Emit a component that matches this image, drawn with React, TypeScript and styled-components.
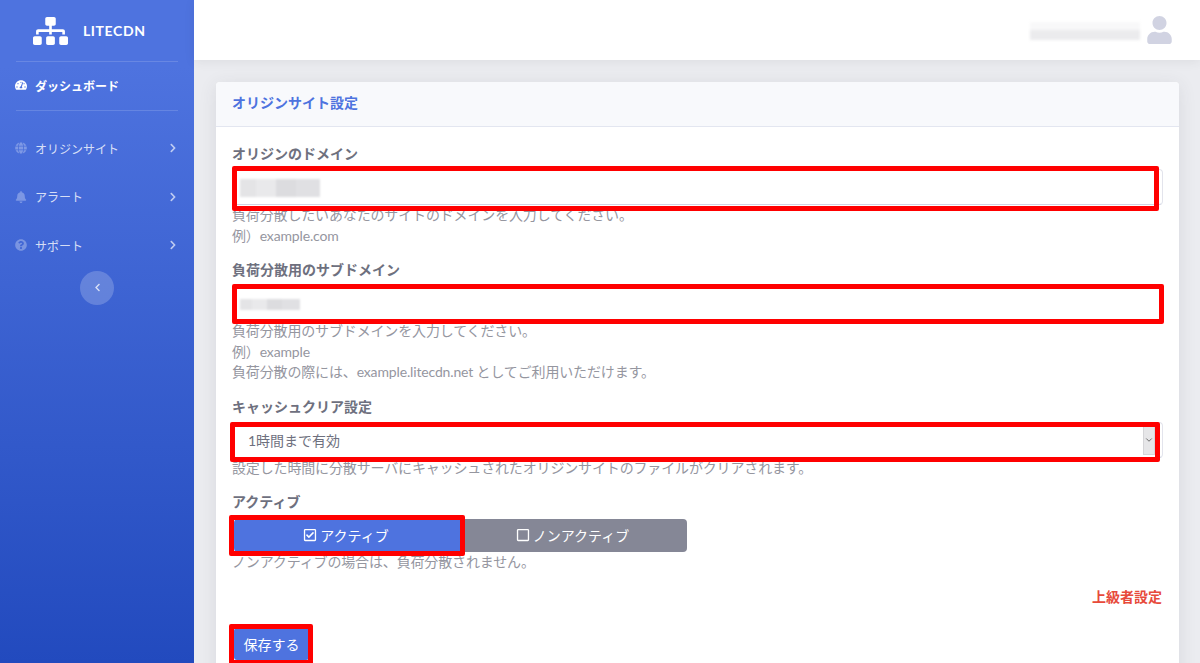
import React from "react";
import styled, { createGlobalStyle } from "styled-components";
import {
  FaSitemap,
  FaTachometerAlt,
  FaGlobe,
  FaBell,
  FaQuestionCircle,
  FaChevronRight,
  FaChevronLeft,
  FaUser,
  FaRegCheckSquare,
  FaRegSquare,
} from "react-icons/fa";
import { ChevronDown } from "lucide-react";

const Global = createGlobalStyle`
  html, body { margin: 0; padding: 0; height: 100%; overflow: hidden; }
  body { font-family: "Lato", "Noto Sans CJK JP", sans-serif; background: #ebecf0; color: #858796; }
  * { box-sizing: border-box; }
`;

const Page = styled.div`
  display: flex;
  width: 1200px;
  height: 663px;
  overflow: hidden;
`;

const Sidebar = styled.aside`
  width: 194px;
  flex: none;
  display: flex;
  flex-direction: column;
  background: linear-gradient(180deg, #4e73df 10%, #224abe 100%);
`;

const Brand = styled.div`
  height: 61px;
  display: flex;
  align-items: center;
  gap: 15px;
  padding-left: 33px;
  color: #fff;
  font-size: 14px;
  font-weight: 700;
  letter-spacing: 0.6px;
  svg { width: 35px; height: 30px; }
`;

const Rule = styled.hr`
  margin: 0 16px;
  border: 0;
  border-top: 1px solid rgba(255, 255, 255, 0.15);
`;

const NavItem = styled.div<{ $active?: boolean; $height: number }>`
  height: ${(p) => p.$height}px;
  display: flex;
  align-items: center;
  padding: 0 17px ${(p) => (p.$active ? 2 : 0)}px 15px;
  gap: 8px;
  font-size: 12px;
  font-weight: ${(p) => (p.$active ? 700 : 400)};
  color: ${(p) => (p.$active ? "#fff" : "rgba(255,255,255,0.8)")};
  > svg:first-child {
    width: 12px;
    height: 12px;
    color: ${(p) => (p.$active ? "#fff" : "rgba(255,255,255,0.3)")};
  }
`;

const NavLabel = styled.span`
  flex: 1;
`;

const Caret = styled(FaChevronRight)`
  width: 8px;
  height: 10px;
  color: rgba(255, 255, 255, 0.65);
`;

const NavList = styled.nav`
  display: flex;
  flex-direction: column;
  padding-top: 13px;
`;

const Collapse = styled.button`
  align-self: center;
  width: 34px;
  height: 34px;
  margin-top: 1px;
  border: 0;
  border-radius: 50%;
  background: rgba(255, 255, 255, 0.2);
  color: rgba(255, 255, 255, 0.75);
  display: flex;
  align-items: center;
  justify-content: center;
  padding: 0;
  svg { width: 7px; height: 9px; }
`;

const Main = styled.div`
  flex: 1;
  min-width: 0;
  display: flex;
  flex-direction: column;
`;

const Topbar = styled.header`
  height: 60px;
  flex: none;
  background: #fff;
  box-shadow: 0 2px 10px rgba(58, 59, 69, 0.08);
  display: flex;
  align-items: center;
  justify-content: flex-end;
  gap: 7px;
  padding-right: 28px;
`;

const BlurName = styled.div`
  width: 110px;
  height: 18px;
  margin-top: 1px;
  filter: blur(1.5px);
  background: linear-gradient(180deg, #f8f8f9 0 45%, #ebebed 45% 100%);
`;

const Avatar = styled(FaUser)`
  width: 25px;
  height: 28px;
  color: #d1d3e2;
`;

const Content = styled.main`
  padding: 22px 21px 0 22px;
`;

const Card = styled.section`
  background: #fff;
  border-radius: 4px 4px 0 0;
  box-shadow: 0 3px 18px rgba(58, 59, 69, 0.1);
`;

const CardHeader = styled.div`
  height: 45px;
  background: #f8f9fc;
  border-bottom: 1px solid #e3e6f0;
  border-radius: 4px 4px 0 0;
  display: flex;
  align-items: center;
  padding: 0 0 5px 16px;
  color: #4e73df;
  font-size: 14px;
  font-weight: 700;
`;

const CardBody = styled.div`
  padding: 16px 16px 40px;
  display: flex;
  flex-direction: column;
  gap: 13px;
`;

const Field = styled.div`
  display: flex;
  flex-direction: column;
`;

const Label = styled.label<{ $space?: number }>`
  font-size: 14px;
  line-height: 21px;
  font-weight: 700;
  color: #6e707e;
  margin-bottom: ${(p) => p.$space ?? 5}px;
`;

const Control = styled.div`
  position: relative;
  width: 100%;
`;

const InputBox = styled.div`
  height: 36px;
  border: 1px solid #e3e4ec;
  border-bottom-color: #d1d3e2;
  border-radius: 4px;
  background: #fff;
  display: flex;
  align-items: center;
  padding-left: 7px;
`;

const Blurred = styled.span<{ $w: number; $h: number }>`
  display: block;
  width: ${(p) => p.$w}px;
  height: ${(p) => p.$h}px;
  margin-top: 2px;
  background: linear-gradient(90deg, #e4e4e6 0 20%, #e9e9eb 20% 45%, #dcdcdf 45% 70%, #e0e0e3 70% 100%);
  filter: blur(1.2px);
`;

const SelectBox = styled(InputBox)`
  padding-left: 15px;
  font-size: 14px;
  color: #6e707e;
  justify-content: space-between;
`;

const SelectArrow = styled.span`
  width: 12px;
  height: 30px;
  margin-right: 7px;
  background: #e6e6e8;
  border: 1px solid #d5d5d8;
  display: flex;
  align-items: center;
  justify-content: center;
  color: #555;
  svg { width: 10px; height: 10px; }
`;

const Hint = styled.div`
  font-size: 14px;
  line-height: 20.5px;
  letter-spacing: -0.15px;
  color: #95969f;
`;

const Marker = styled.div<{ $l: number; $t: number; $w: number; $h: number }>`
  position: absolute;
  left: ${(p) => p.$l}px;
  top: ${(p) => p.$t}px;
  width: ${(p) => p.$w}px;
  height: ${(p) => p.$h}px;
  border: 5px solid #f00;
  border-radius: 2px;
  pointer-events: none;
`;

const Toggle = styled.div`
  position: relative;
  display: flex;
  width: 453px;
  height: 33px;
  margin-left: 2px;
`;

const ToggleButton = styled.div<{ $on?: boolean }>`
  flex: ${(p) => (p.$on ? "0 0 227px" : "1")};
  display: flex;
  align-items: center;
  justify-content: center;
  gap: 3px;
  padding: 0 3px 1px 0;
  background: ${(p) => (p.$on ? "#4e73df" : "#858796")};
  color: #fff;
  font-size: 14px;
  border-radius: ${(p) => (p.$on ? "4px 0 0 4px" : "0 4px 4px 0")};
  svg { width: 14px; height: 14px; }
`;

const Advanced = styled.div`
  align-self: flex-end;
  margin-right: 1px;
  font-size: 14px;
  line-height: 21px;
  font-weight: 700;
  color: #e74a3b;
`;

const SaveWrap = styled.div`
  position: relative;
  align-self: flex-start;
  margin: 21px 0 0 2px;
`;

const Save = styled.button`
  display: block;
  width: 75px;
  height: 32px;
  border: 0;
  border-radius: 3px;
  background: #4e73df;
  color: #fff;
  font: 400 14px "Lato", "Noto Sans CJK JP", sans-serif;
  padding: 0;
`;

const Sub = styled.div`
  display: flex;
  flex-direction: column;
`;

export default function App() {
  return (
    <Page>
      <Global />
      <Sidebar>
        <Brand>
          <FaSitemap />
          <span>LITECDN</span>
        </Brand>
        <Rule />
        <NavItem $active $height={48}>
          <FaTachometerAlt />
          <NavLabel>ダッシュボード</NavLabel>
        </NavItem>
        <Rule />
        <NavList>
          <NavItem $height={48.5}>
            <FaGlobe />
            <NavLabel>オリジンサイト</NavLabel>
            <Caret />
          </NavItem>
          <NavItem $height={48.5}>
            <FaBell />
            <NavLabel>アラート</NavLabel>
            <Caret />
          </NavItem>
          <NavItem $height={48.5}>
            <FaQuestionCircle />
            <NavLabel>サポート</NavLabel>
            <Caret />
          </NavItem>
        </NavList>
        <Collapse>
          <FaChevronLeft />
        </Collapse>
      </Sidebar>
      <Main>
        <Topbar>
          <BlurName />
          <Avatar />
        </Topbar>
        <Content>
          <Card>
            <CardHeader>オリジンサイト設定</CardHeader>
            <CardBody>
              <Field>
                <Label>オリジンのドメイン</Label>
                <Control>
                  <InputBox>
                    <Blurred $w={80} $h={18} />
                  </InputBox>
                  <Marker $l={0} $t={-3} $w={927} $h={45} />
                </Control>
                <Hint>負荷分散したいあなたのサイトのドメインを入力してください。</Hint>
                <Hint>例）example.com</Hint>
              </Field>
              <Field>
                <Label>負荷分散用のサブドメイン</Label>
                <Control>
                  <InputBox>
                    <Blurred $w={60} $h={11} />
                  </InputBox>
                  <Marker $l={0} $t={-1} $w={932} $h={40} />
                </Control>
                <Hint>負荷分散用のサブドメインを入力してください。</Hint>
                <Hint>例）example</Hint>
                <Hint>負荷分散の際には、example.litecdn.net としてご利用いただけます。</Hint>
              </Field>
              <Field>
                <Label>キャッシュクリア設定</Label>
                <Control>
                  <SelectBox>
                    <span>1時間まで有効</span>
                    <SelectArrow>
                      <ChevronDown />
                    </SelectArrow>
                  </SelectBox>
                  <Marker $l={-2} $t={0.5} $w={930} $h={40} />
                </Control>
                <Hint>設定した時間に分散サーバにキャッシュされたオリジンサイトのファイルがクリアされます。</Hint>
              </Field>
              <Field>
                <Label $space={7}>アクティブ</Label>
                <Toggle>
                  <ToggleButton $on>
                    <FaRegCheckSquare />
                    アクティブ
                  </ToggleButton>
                  <ToggleButton>
                    <FaRegSquare />
                    ノンアクティブ
                  </ToggleButton>
                  <Marker $l={-5} $t={-4} $w={236} $h={41} />
                </Toggle>
                <Hint>ノンアクティブの場合は、負荷分散されません。</Hint>
              </Field>
              <Sub>
                <Advanced>上級者設定</Advanced>
                <SaveWrap>
                  <Save>保存する</Save>
                  <Marker $l={-5} $t={-4} $w={84} $h={41} />
                </SaveWrap>
              </Sub>
            </CardBody>
          </Card>
        </Content>
      </Main>
    </Page>
  );
}
